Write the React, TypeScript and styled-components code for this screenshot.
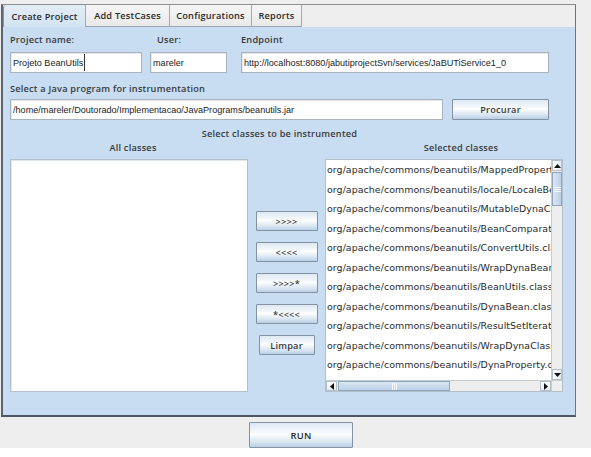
import React from 'react';
import styled, { createGlobalStyle } from 'styled-components';

const GlobalStyle = createGlobalStyle`
  html, body { margin: 0; padding: 0; background: #ffffff; }
  body { font-family: "DejaVu Sans", "Noto Sans", sans-serif; }
  * { box-sizing: border-box; }
`;

const labelFont = `
  font-family: "Open Sans", "DejaVu Sans", sans-serif;
  font-weight: 600;
  font-size: 9.2px;
  letter-spacing: 0.22px;
  color: #3a3a3a;
`;

const Window = styled.div`
  width: 591px;
  height: 448px;
  background: #eeeeee;
  padding: 4px 15px 0 1px;
  display: flex;
  flex-direction: column;
  align-items: flex-start;
  overflow: hidden;
`;

const Frame = styled.div`
  width: 575px;
  height: 413px;
  border-top: 1px solid #8f8f8f;
  border-left: 2px solid #5d6472;
  border-right: 1px solid #6f747c;
  border-bottom: 2px solid #4f5562;
  display: flex;
  flex-direction: column;
`;

const TabStrip = styled.div`
  height: 22px;
  display: flex;
  align-items: stretch;
  background: #eeeeee;
`;

const Tab = styled.div<{ $w: number; $active?: boolean }>`
  width: ${p => p.$w}px;
  display: flex;
  align-items: center;
  justify-content: center;
  ${labelFont}
  color: #2a2a2a;
  border-right: 1px solid #a4a9b0;
  border-left: ${p => (p.$active ? '1px solid #8c96a3' : 'none')};
  border-bottom: ${p => (p.$active ? 'none' : '1px solid #9aa5b2')};
  border-top-left-radius: ${p => (p.$active ? '3px' : '0')};
  background: ${p =>
    p.$active
      ? 'linear-gradient(#e4edf7, #d3e3f3)'
      : 'linear-gradient(#f6f6f6, #e9e9e9)'};
`;

const TabSpacer = styled.div`
  width: 1px;
`;

const Content = styled.div`
  flex: 1;
  background: #c8ddf2;
  padding: 0 0 0 7px;
  display: flex;
  flex-direction: column;
`;

const FieldRow = styled.div<{ $top: number }>`
  display: flex;
  align-items: flex-start;
  margin-top: ${p => p.$top}px;
`;

const FieldGroup = styled.div<{ $w: number; $gap?: number }>`
  width: ${p => p.$w}px;
  margin-left: ${p => p.$gap ?? 0}px;
  display: flex;
  flex-direction: column;
`;

const Label = styled.div<{ $indent?: number }>`
  height: 14px;
  line-height: 14px;
  padding-left: ${p => p.$indent ?? 0}px;
  ${labelFont}
  white-space: nowrap;
`;

const TextField = styled.div<{ $w?: number; $mt?: number }>`
  width: ${p => (p.$w ? `${p.$w}px` : '100%')};
  height: 21px;
  margin-top: ${p => p.$mt ?? 0}px;
  background: #ffffff;
  border: 1px solid #a9b3bd;
  box-shadow: inset 1px 1px 0 #e4e8ec;
  display: flex;
  align-items: center;
  padding-left: 2px;
  font-family: "Liberation Sans", Arial, sans-serif;
  font-size: 9.1px;
  color: #222;
  white-space: nowrap;
  overflow: hidden;
`;

const Caret = styled.span`
  display: inline-block;
  width: 1px;
  height: 17px;
  background: #333;
  margin-left: 1px;
`;

const JButton = styled.div<{ $w: number; $h: number; $gap?: number }>`
  width: ${p => p.$w}px;
  height: ${p => p.$h}px;
  margin-left: ${p => p.$gap ?? 0}px;
  border: 1px solid #8393a3;
  border-radius: 1px;
  background: linear-gradient(#dde8f3 0%, #f6f9fc 40%, #ffffff 45%, #d7e4f1 80%, #b8cfe5 100%);
  display: flex;
  align-items: center;
  justify-content: center;
  ${labelFont}
  white-space: nowrap;
`;

const SectionTitle = styled.div<{ $top: number; $w: number; $offset: number }>`
  width: ${p => p.$w}px;
  margin-top: ${p => p.$top}px;
  padding-left: ${p => p.$offset}px;
  height: 14px;
  line-height: 14px;
  text-align: center;
  ${labelFont}
  white-space: nowrap;
`;

const TitleRow = styled.div`
  display: flex;
`;

const Lists = styled.div`
  margin-top: 4px;
  height: 233px;
  display: grid;
  grid-template-columns: 238px 77px 238px;
`;

const PlainList = styled.div`
  background: #ffffff;
  border: 1px solid #b3bfcb;
  box-shadow: inset 1px 1px 0 #dfe5eb;
`;

const Mover = styled.div`
  padding-top: 52px;
  display: flex;
  flex-direction: column;
  align-items: center;
  gap: 11px;
`;

const ScrollList = styled.div`
  background: #ffffff;
  border: 1px solid #b3bfcb;
  display: grid;
  grid-template-columns: 1fr 11px;
  grid-template-rows: 1fr 11px;
  overflow: hidden;
`;

const Viewport = styled.div`
  overflow: hidden;
  padding-left: 1px;
`;

const Item = styled.div`
  height: 19.5px;
  line-height: 19.5px;
  font-family: "DejaVu Sans", sans-serif;
  font-size: 9.45px;
  letter-spacing: 0.05px;
  color: #2a2a2a;
  white-space: nowrap;
`;

const VBar = styled.div`
  background: #eeeeee;
  border-left: 1px solid #c4ccd4;
  display: flex;
  flex-direction: column;
`;

const HBar = styled.div`
  background: #eeeeee;
  border-top: 1px solid #c4ccd4;
  display: flex;
`;

const Corner = styled.div`
  background: #eeeeee;
  border-left: 1px solid #c4ccd4;
  border-top: 1px solid #c4ccd4;
`;

const Arrow = styled.div<{ $vertical?: boolean }>`
  width: ${p => (p.$vertical ? '100%' : '11px')};
  height: ${p => (p.$vertical ? '11px' : '100%')};
  display: flex;
  align-items: center;
  justify-content: center;
  background: linear-gradient(${p => (p.$vertical ? '90deg' : '180deg')}, #ffffff, #e6ecf2);
  border: 1px solid #b4bfca;
`;

const Track = styled.div<{ $vertical?: boolean }>`
  flex: 1;
  display: flex;
  flex-direction: ${p => (p.$vertical ? 'column' : 'row')};
`;

const VThumb = styled.div`
  margin-top: 1px;
  height: 34px;
  width: 100%;
  border: 1px solid #8fa6bd;
  background: linear-gradient(90deg, #dbe7f3, #bcd2e8);
  display: flex;
  align-items: center;
  justify-content: center;
`;

const HThumb = styled.div`
  margin-left: 1px;
  width: 112px;
  height: 100%;
  border: 1px solid #8fa6bd;
  background: linear-gradient(#dbe7f3, #bcd2e8);
  display: flex;
  align-items: center;
  justify-content: center;
`;

const RunButton = styled(JButton)`
  margin-top: 5px;
  margin-left: 248px;
  font-size: 9.4px;
  color: #2a2a2a;
`;

const Tri = ({ dir }: { dir: 'up' | 'down' | 'left' | 'right' }) => {
  const pts = {
    up: '0,4 3.5,0 7,4',
    down: '0,0 3.5,4 7,0',
    left: '4,0 0,3.5 4,7',
    right: '0,0 4,3.5 0,7',
  }[dir];
  const w = dir === 'up' || dir === 'down' ? 7 : 4;
  const h = dir === 'up' || dir === 'down' ? 4 : 7;
  return (
    <svg width={w} height={h} viewBox={`0 0 ${w} ${h}`}>
      <polygon points={pts} fill="#111" />
    </svg>
  );
};

const Grip = ({ vertical }: { vertical?: boolean }) =>
  vertical ? (
    <svg width="7" height="5" viewBox="0 0 7 5">
      <rect x="0" y="0" width="7" height="1" fill="#f4f8fc" />
      <rect x="0" y="2" width="7" height="1" fill="#f4f8fc" />
      <rect x="0" y="4" width="7" height="1" fill="#f4f8fc" />
    </svg>
  ) : (
    <svg width="5" height="7" viewBox="0 0 5 7">
      <rect x="0" y="0" width="1" height="7" fill="#f4f8fc" />
      <rect x="2" y="0" width="1" height="7" fill="#f4f8fc" />
      <rect x="4" y="0" width="1" height="7" fill="#f4f8fc" />
    </svg>
  );

const classes = [
  'org/apache/commons/beanutils/MappedPropertyDescriptor.class',
  'org/apache/commons/beanutils/locale/LocaleBeanUtils.class',
  'org/apache/commons/beanutils/MutableDynaClass.class',
  'org/apache/commons/beanutils/BeanComparator.class',
  'org/apache/commons/beanutils/ConvertUtils.class',
  'org/apache/commons/beanutils/WrapDynaBean.class',
  'org/apache/commons/beanutils/BeanUtils.class',
  'org/apache/commons/beanutils/DynaBean.class',
  'org/apache/commons/beanutils/ResultSetIterator.class',
  'org/apache/commons/beanutils/WrapDynaClass.class',
  'org/apache/commons/beanutils/DynaProperty.class',
  'org/apache/commons/beanutils/PropertyUtils.class',
];

export default function App() {
  return (
    <>
      <GlobalStyle />
      <Window>
        <Frame>
          <TabStrip>
            <Tab $w={83} $active>Create Project</Tab>
            <Tab $w={84}>Add TestCases</Tab>
            <Tab $w={82}>Configurations</Tab>
            <Tab $w={50}>Reports</Tab>
            <TabSpacer />
          </TabStrip>
          <Content>
            <FieldRow $top={6}>
              <FieldGroup $w={132}>
                <Label>Project name:</Label>
                <TextField $mt={5}>
                  Projeto BeanUtils<Caret />
                </TextField>
              </FieldGroup>
              <FieldGroup $w={77} $gap={8}>
                <Label $indent={7}>User:</Label>
                <TextField $mt={5}>mareler</TextField>
              </FieldGroup>
              <FieldGroup $w={308} $gap={14}>
                <Label>Endpoint</Label>
                <TextField $mt={5}>
                  http://localhost:8080/jabutiprojectSvn/services/JaBUTiService1_0
                </TextField>
              </FieldGroup>
            </FieldRow>
            <FieldRow $top={9}>
              <Label>Select a Java program for instrumentation</Label>
            </FieldRow>
            <FieldRow $top={3}>
              <TextField $w={433}>
                /home/mareler/Doutorado/Implementacao/JavaPrograms/beanutils.jar
              </TextField>
              <JButton $w={97} $h={21} $gap={9}>Procurar</JButton>
            </FieldRow>
            <SectionTitle $top={7} $w={539} $offset={0}>
              Select classes to be instrumented
            </SectionTitle>
            <TitleRow>
              <SectionTitle $top={0} $w={238} $offset={8}>All classes</SectionTitle>
              <SectionTitle $top={0} $w={77} $offset={0} />
              <SectionTitle $top={0} $w={238} $offset={34}>Selected classes</SectionTitle>
            </TitleRow>
            <Lists>
              <PlainList />
              <Mover>
                <JButton $w={62} $h={20}>&gt;&gt;&gt;&gt;</JButton>
                <JButton $w={62} $h={20}>&lt;&lt;&lt;&lt;</JButton>
                <JButton $w={62} $h={20}>&gt;&gt;&gt;&gt;*</JButton>
                <JButton $w={62} $h={20}>*&lt;&lt;&lt;&lt;</JButton>
                <JButton $w={56} $h={20}>Limpar</JButton>
              </Mover>
              <ScrollList>
                <Viewport>
                  {classes.map(c => (
                    <Item key={c}>{c}</Item>
                  ))}
                </Viewport>
                <VBar>
                  <Arrow $vertical>
                    <Tri dir="up" />
                  </Arrow>
                  <Track $vertical>
                    <VThumb>
                      <Grip vertical />
                    </VThumb>
                  </Track>
                  <Arrow $vertical>
                    <Tri dir="down" />
                  </Arrow>
                </VBar>
                <HBar>
                  <Arrow>
                    <Tri dir="left" />
                  </Arrow>
                  <Track>
                    <HThumb>
                      <Grip />
                    </HThumb>
                  </Track>
                  <Arrow>
                    <Tri dir="right" />
                  </Arrow>
                </HBar>
                <Corner />
              </ScrollList>
            </Lists>
          </Content>
        </Frame>
        <RunButton $w={104} $h={26}>RUN</RunButton>
      </Window>
    </>
  );
}
